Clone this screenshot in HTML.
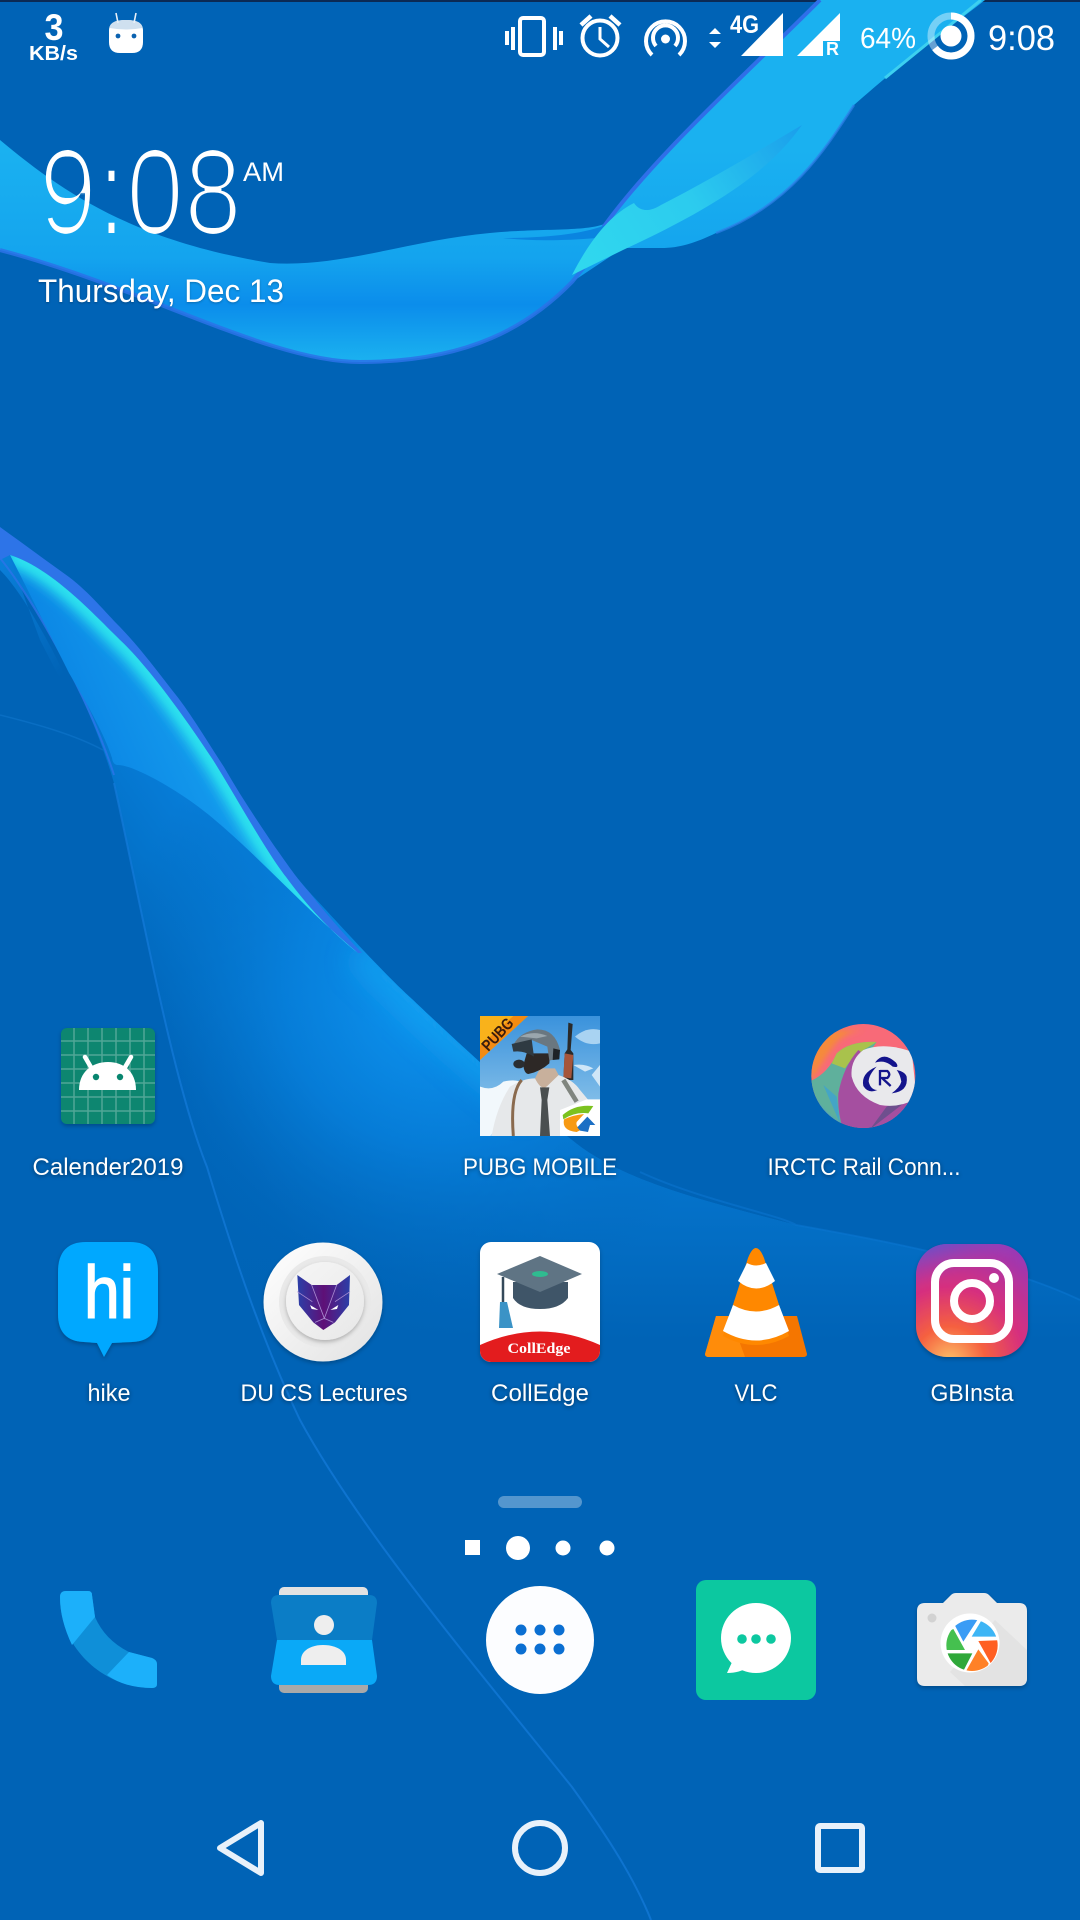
<!DOCTYPE html>
<html><head><meta charset="utf-8"><style>
html,body{margin:0;padding:0;width:1080px;height:1920px;overflow:hidden;background:#0063b6}
svg{display:block;font-family:"Liberation Sans",sans-serif}
.lb{fill:#fff;font-size:24px;text-anchor:middle;filter:drop-shadow(0 1px 2px rgba(0,0,0,.45))}
</style></head><body>
<svg width="1080" height="1920" viewBox="0 0 1080 1920" xmlns="http://www.w3.org/2000/svg">
<defs>
<linearGradient id="gA" gradientUnits="userSpaceOnUse" x1="0" y1="150" x2="0" y2="365"><stop offset="0" stop-color="#1ab1f0"/><stop offset=".5" stop-color="#14a4ee"/><stop offset=".72" stop-color="#0b8deb"/><stop offset="1" stop-color="#1cb4f0"/></linearGradient>
<linearGradient id="gLin" gradientUnits="userSpaceOnUse" x1="330" y1="880" x2="140" y2="1010"><stop offset="0" stop-color="#0a86e4"/><stop offset=".6" stop-color="#0474cc"/><stop offset="1" stop-color="#0065b9"/></linearGradient>
<linearGradient id="gDown" gradientUnits="userSpaceOnUse" x1="0" y1="1000" x2="0" y2="1340"><stop offset="0" stop-color="#0063b6" stop-opacity="0"/><stop offset="1" stop-color="#0063b6"/></linearGradient>
<radialGradient id="gB" gradientUnits="userSpaceOnUse" cx="430" cy="1000" r="320"><stop offset="0" stop-color="#0e94ef"/><stop offset=".45" stop-color="#0780dc" stop-opacity=".75"/><stop offset="1" stop-color="#0063b6" stop-opacity="0"/></radialGradient>
<linearGradient id="gF" gradientUnits="userSpaceOnUse" x1="60" y1="720" x2="240" y2="640"><stop offset="0" stop-color="#0a84e4"/><stop offset="1" stop-color="#1aa8f2"/></linearGradient>
<linearGradient id="gC" gradientUnits="userSpaceOnUse" x1="580" y1="270" x2="800" y2="125"><stop offset="0" stop-color="#30d8ee"/><stop offset=".5" stop-color="#2ccbee"/><stop offset="1" stop-color="#1a9fec"/></linearGradient>
<linearGradient id="gLeft" gradientUnits="userSpaceOnUse" x1="0" y1="570" x2="90" y2="640"><stop offset="0" stop-color="#0a7ed8"/><stop offset="1" stop-color="#0063b6"/></linearGradient>
<radialGradient id="gIns" cx=".3" cy="1.05" r="1.15"><stop offset="0" stop-color="#fdc468"/><stop offset=".28" stop-color="#f56040"/><stop offset=".58" stop-color="#d62f7e"/><stop offset="1" stop-color="#9a38b5"/></radialGradient>
<linearGradient id="gIns2" x1="0" y1="0" x2=".3" y2="1"><stop offset="0" stop-color="#4f5bd5" stop-opacity=".9"/><stop offset=".35" stop-color="#a83cb0" stop-opacity="0"/></linearGradient>
<linearGradient id="gSky" x1="0" y1="0" x2="0" y2="1"><stop offset="0" stop-color="#3a92dc"/><stop offset=".7" stop-color="#7fbce8"/><stop offset="1" stop-color="#c2e0f5"/></linearGradient>
<linearGradient id="gDu" x1="0" y1="0" x2="1" y2="1"><stop offset="0" stop-color="#fff"/><stop offset="1" stop-color="#e2e2e2"/></linearGradient>
<linearGradient id="gDu2" x1="0" y1="0" x2="1" y2="1"><stop offset="0" stop-color="#f6f6f6"/><stop offset="1" stop-color="#e8e8e8"/></linearGradient>
<linearGradient id="gCat" x1="0" y1="0" x2="1" y2="0"><stop offset="0" stop-color="#2b3fa8"/><stop offset=".5" stop-color="#5f1077"/><stop offset="1" stop-color="#2b3fa8"/></linearGradient>
<clipPath id="cB"><path d="M0 555C40 610 90 700 114 783C140 900 172 1080 207 1167C235 1260 262 1340 300 1420C360 1530 470 1660 572 1787C610 1840 635 1880 651 1920L1080 1920L1080 1300C1000 1262 880 1240 796 1225C700 1200 620 1180 572 1140C520 1100 455 1040 413 1000C385 975 340 925 310 893L0 527Z"/></clipPath>
<clipPath id="cF"><path id="pF" d="M10 555C50 568 88 608 120 640C150 668 190 725 213 760C235 795 265 850 286 877C310 910 335 935 358 953C300 905 240 835 189 800C160 780 130 765 118 765Q113 765 112 758C105 735 85 700 69 673C50 635 28 590 10 555Z"/></clipPath>
<clipPath id="cIr"><circle cx="190" cy="198" r="156"/></clipPath>
<clipPath id="cPb"><rect x="60" y="48" width="360" height="360"/></clipPath>
<clipPath id="cCo"><rect x="480" y="1242" width="120" height="120" rx="11"/></clipPath>
<clipPath id="cCal"><rect x="61" y="1028" width="94" height="96" rx="6"/></clipPath>
<clipPath id="cLens"><circle cx="186" cy="181" r="77"/></clipPath>
<filter id="bl4" x="-20%" y="-20%" width="140%" height="140%"><feGaussianBlur stdDeviation="4"/></filter>
<filter id="bl6" x="-30%" y="-30%" width="160%" height="160%"><feGaussianBlur stdDeviation="6"/></filter>
<filter id="bl14" filterUnits="userSpaceOnUse" x="250" y="850" width="450" height="400"><feGaussianBlur stdDeviation="14"/></filter>
<filter id="bl9"><feGaussianBlur stdDeviation="9"/></filter>
<filter id="thin" filterUnits="userSpaceOnUse" x="0" y="100" width="320" height="160"><feMorphology operator="erode" radius="2 1"/><feGaussianBlur stdDeviation=".35"/></filter>
<filter id="sh" x="-20%" y="-20%" width="140%" height="140%"><feDropShadow dx="0" dy="2" stdDeviation="2" flood-color="#000" flood-opacity=".25"/></filter>
</defs>

<!-- wallpaper -->
<rect width="1080" height="1920" fill="#0063b6"/>
<rect width="1080" height="2" fill="#0b2a55"/>

<!-- lower wave -->
<g clip-path="url(#cB)">
<rect x="0" y="500" width="1080" height="1420" fill="url(#gLin)"/>
<rect x="0" y="1000" width="1080" height="920" fill="url(#gDown)"/>
<rect x="0" y="1340" width="1080" height="580" fill="#0063b6"/>
<circle cx="430" cy="1000" r="320" fill="url(#gB)"/>
<path d="M358 953C400 990 460 1055 530 1105" fill="none" stroke="#16a6f2" stroke-width="28" opacity=".75" filter="url(#bl14)"/>
</g>
<path d="M0 530L0 570C30 600 70 680 114 783L40 640Z" fill="url(#gLeft)"/>
<path d="M0 558C34 600 90 700 114 775" fill="none" stroke="#2d74e8" stroke-width="2" opacity=".8"/>
<path d="M114 783C140 900 172 1080 207 1167C235 1260 262 1340 300 1420C360 1530 470 1660 572 1787C610 1840 635 1880 651 1920" fill="none" stroke="#1379d8" stroke-width="2" opacity=".75"/>
<path d="M0 715C40 725 75 735 103 750" fill="none" stroke="#0d74c9" stroke-width="1.500" opacity=".7"/>
<path d="M640 1172C700 1200 780 1215 796 1225C880 1240 1000 1262 1080 1300" fill="none" stroke="#0a74ce" stroke-width="2" opacity=".6"/>
<!-- purple band -->
<path d="M0 527C25 545 48 562 69 577C90 593 105 612 120 627C140 648 155 668 172 690C190 712 205 738 224 767C240 795 258 822 275 847C290 868 298 880 310 893C325 913 345 935 362 953L358 953C335 935 310 910 286 877C265 850 235 795 213 760C190 725 150 668 120 640C88 608 50 568 10 555L0 560Z" fill="#2d74e8"/>
<!-- bright crescent -->
<use href="#pF" fill="url(#gF)"/>
<g clip-path="url(#cF)">
<path d="M10 555C50 568 88 608 120 640C150 668 190 725 213 760C235 795 265 850 286 877C310 910 335 935 358 953" fill="none" stroke="#2be0ee" stroke-width="22" filter="url(#bl6)"/>
<path d="M10 555C50 568 88 608 120 640C150 668 190 725 213 760C235 795 265 850 286 877C310 910 335 935 358 953" fill="none" stroke="#2fe0ee" stroke-width="6" filter="url(#bl4)"/>
</g>

<!-- upper wave -->
<path d="M0 140C60 190 130 240 270 263C340 268 410 240 490 233C540 228 590 232 606 223C650 160 740 80 820 0L985 0C960 20 935 36 916 52C900 66 880 82 854 105C825 150 790 205 716 233C695 243 680 248 661 248L623 248L572 282C530 325 470 362 360 362C270 362 150 290 0 250Z" fill="url(#gA)"/>
<path d="M0 250C150 290 270 362 360 362C470 362 530 325 572 282L606 240" fill="none" stroke="#2b72e8" stroke-width="4" opacity=".85"/>
<path d="M600 232C650 160 740 80 820 0" fill="none" stroke="#2f6fe8" stroke-width="4"/>
<path d="M854 105C825 150 790 205 716 233" fill="none" stroke="#2f7fe8" stroke-width="2.500" opacity=".7"/>
<path d="M981 0L885 78" fill="none" stroke="#3cd0f0" stroke-width="3"/>
<path d="M503 238C540 238 580 235 606 225L597 238C560 241 530 241 503 238Z" fill="#0a84e0"/>
<path d="M572 275C590 240 610 215 634 203C640 212 650 212 661 205C710 180 760 150 802 125C770 170 720 205 623 250Z" fill="url(#gC)"/>

<!-- status bar left -->
<text x="54" y="40" font-size="37" font-weight="700" fill="#fff" text-anchor="middle" textLength="19" lengthAdjust="spacingAndGlyphs">3</text>
<text x="29" y="60" font-size="20" font-weight="700" fill="#fff" textLength="49" lengthAdjust="spacingAndGlyphs">KB/s</text>
<path d="M109 30Q109 20 126 20Q143 20 143 30L143 42Q143 53 132 53L120 53Q109 53 109 42Z" fill="#fff"/>
<path d="M109.500 28Q110 20 126 20Q142 20 142.500 28Q126 31 109.500 28Z" fill="#cfe0ef"/>
<path d="M116 13L118 23M136 13L134 23" stroke="#e8f0f8" stroke-width="1.600"/>
<circle cx="118" cy="36" r="2.400" fill="#0b62b0"/><circle cx="134" cy="36" r="2.400" fill="#0b62b0"/>

<!-- status bar right -->
<g fill="#fff">
<rect x="505" y="31" width="4" height="14"/><rect x="511" y="27" width="4" height="23"/>
<rect x="553" y="27" width="4" height="23"/><rect x="559" y="31" width="4" height="14"/>
</g>
<rect x="520" y="18" width="24" height="37" rx="3" fill="none" stroke="#fff" stroke-width="4"/>
<circle cx="600" cy="38" r="17.500" fill="none" stroke="#fff" stroke-width="4"/>
<path d="M600 27V39L609 47" fill="none" stroke="#fff" stroke-width="3"/>
<path d="M581 25L591 16M610 16L620 25" stroke="#fff" stroke-width="4.500"/>
<circle cx="665.500" cy="39" r="4.500" fill="#fff"/>
<path d="M656 46A12.500 12.500 0 1 1 675 46" fill="none" stroke="#fff" stroke-width="4"/>
<path d="M652 55A19.500 19.500 0 1 1 679 55" fill="none" stroke="#fff" stroke-width="4"/>
<path d="M715 28L721 34H709ZM715 48L709 42H721Z" fill="#fff"/>
<text x="730" y="33" font-size="25" font-weight="700" fill="#fff" textLength="29" lengthAdjust="spacingAndGlyphs">4G</text>
<polygon points="783,13 783,56 741,56" fill="#fff"/>
<polygon points="840,13 840,41 823,41 823,56 797,56" fill="#fff"/>
<text x="826" y="55" font-size="18" font-weight="700" fill="#fff" textLength="13" lengthAdjust="spacingAndGlyphs">R</text>
<text x="860" y="48" font-size="29" fill="#fff" textLength="56" lengthAdjust="spacingAndGlyphs">64%</text>
<circle cx="951" cy="36" r="20" fill="none" stroke="#fff" stroke-opacity=".4" stroke-width="7"/>
<path d="M951 16A20 20 0 1 1 935 48" fill="none" stroke="#fff" stroke-width="7"/>
<circle cx="951" cy="36" r="10.500" fill="#fff"/>
<text x="988" y="50" font-size="35" fill="#fff" textLength="67" lengthAdjust="spacingAndGlyphs">9:08</text>

<!-- clock -->
<g filter="url(#thin)"><text x="39" y="234" font-size="122" fill="#fff" textLength="203" lengthAdjust="spacingAndGlyphs">9:08</text></g>
<text x="243" y="181" font-size="27" fill="#fff" textLength="41" lengthAdjust="spacingAndGlyphs">AM</text>
<text x="38" y="302" font-size="32" fill="#fff" textLength="246" lengthAdjust="spacingAndGlyphs" style="filter:drop-shadow(0 1px 1px rgba(0,0,0,.25))">Thursday, Dec 13</text>

<!-- Calender2019 -->
<g filter="url(#sh)"><rect x="61" y="1028" width="94" height="96" rx="6" fill="#08866f"/></g>
<g clip-path="url(#cCal)" stroke="#fff" stroke-opacity=".28" stroke-width="1.500">
<path d="M74 1028V1124M88 1028V1124M102 1028V1124M116 1028V1124M130 1028V1124M144 1028V1124M61 1041H155M61 1055H155M61 1069H155M61 1083H155M61 1097H155M61 1111H155"/>
</g>
<path d="M79 1090C79 1072 92 1062 108 1062C124 1062 136 1072 136 1090Z" fill="#fff"/>
<path d="M85 1057L92 1069M131 1057L124 1069" stroke="#fff" stroke-width="4.500" stroke-linecap="round"/>
<circle cx="96" cy="1077" r="3.200" fill="#08866f"/><circle cx="120" cy="1077" r="3.200" fill="#08866f"/>
<text class="lb" x="108" y="1175" textLength="151" lengthAdjust="spacingAndGlyphs">Calender2019</text>

<!-- PUBG -->
<g transform="translate(460 1000) scale(.33333)">
<g clip-path="url(#cPb)">
<rect x="60" y="48" width="360" height="360" fill="url(#gSky)"/>
<path d="M60 260Q100 275 130 245Q170 235 190 250L150 340L90 408H60Z" fill="#f2f8fc"/>
<path d="M345 110Q380 80 420 90V130Q380 140 345 110Z" fill="#a9d3f2"/>
<path d="M340 195Q375 190 400 205L375 215Z M395 225L420 195V260Z" fill="#cfe6f7"/>
<path d="M325 68L338 72L332 150L340 160V240L310 240L314 160L322 148Z" fill="#2a2a2a"/>
<path d="M314 160L340 165L334 235L310 232Z" fill="#a5553b"/>
<path d="M95 408Q110 320 150 260Q190 235 225 235L295 225Q340 240 360 270L385 300L400 408Z" fill="#e6e8ea"/>
<path d="M185 240Q150 280 160 408" fill="none" stroke="#8a6a4e" stroke-width="9"/>
<path d="M310 240L350 305" stroke="#80857f" stroke-width="14"/>
<path d="M225 235Q245 275 262 258L296 225L285 205L240 205Z" fill="#c8b09c"/>
<path d="M240 262L268 262L262 300L270 408H240L245 300Z" fill="#4a4f50"/>
<path d="M190 195Q192 220 205 222Q240 215 268 190L270 160L200 160Z" fill="#2d2826"/>
<path d="M160 135Q180 95 232 88Q285 88 300 150L295 175L268 182L262 140L215 120Z" fill="#6a7780"/>
<path d="M180 110Q220 90 262 108L230 115Z" fill="#9aa6ad"/>
<path d="M155 132L215 118L222 170Q190 150 160 155Z" fill="#2f3a42"/>
<ellipse cx="177" cy="192" rx="17" ry="13" fill="#2a2e32"/>
<path d="M280 145L300 150L298 178L278 180Z" fill="#1e2226"/>
<polygon points="60,48 204,48 60,180" fill="#f9b21b"/>
<polygon points="160,48 204,48 60,180 60,138" fill="#f38b12"/>
<text x="115" y="118" font-size="48" font-weight="700" fill="#3a1c0c" text-anchor="middle" textLength="115" lengthAdjust="spacingAndGlyphs" transform="rotate(-47 115 105)">PUBG</text>
<polygon points="300,330 380,298 420,298 420,408 300,408" fill="#fff"/>
<path d="M308 345Q345 312 400 318L385 340Q345 335 310 358Z" fill="#7cc21f"/>
<path d="M312 358Q340 345 372 342L350 366Q346 382 366 388L350 396Q305 392 312 358Z" fill="#f79a13"/>
<path d="M352 382L382 350L406 375H390L384 396L360 392Z" fill="#1c6fc4"/>
</g>
</g>
<text class="lb" x="540" y="1175" textLength="154" lengthAdjust="spacingAndGlyphs">PUBG MOBILE</text>

<!-- IRCTC -->
<g transform="translate(800 1010) scale(.33333)">
<g clip-path="url(#cIr)">
<rect x="30" y="40" width="320" height="320" fill="#f86a78"/>
<path d="M30 220V60H195Q130 65 100 110Q70 150 30 220Z" fill="#f58a3a" filter="url(#bl9)"/>
<path d="M28 215Q85 190 110 130Q150 92 230 96L170 180L120 350L30 350Z" fill="#5fb09c"/>
<path d="M110 130Q150 92 230 96L190 120Q150 150 135 175L95 160Z" fill="#a9c24c"/>
<path d="M40 260Q70 310 128 345L60 350Z" fill="#3a9fdc" filter="url(#bl4)"/>
<path d="M70 225L120 340L110 260Z" fill="#44a5c6"/>
<path d="M175 120Q130 170 115 250Q112 310 130 358H300L350 255Z" fill="#a54fa0"/>
<path d="M210 358L350 250L260 290Z" fill="#6e4f8e"/>
<path d="M335 125Q250 95 190 120Q150 150 155 200Q170 260 240 285Q300 295 350 265Z" fill="#e9e9ec"/>
</g>
<g fill="#14148c">
<path d="M225 158Q250 122 288 158Q300 175 278 170Q255 148 225 158Z"/>
<path d="M190 228Q182 190 230 170Q206 195 206 215Q212 240 232 240Q205 252 190 228Z"/>
<path d="M320 200Q326 245 275 250Q300 232 304 215Q300 192 290 180Q315 185 320 200Z"/>
</g>
<path d="M240 180V226M240 183H262Q274 193 262 204H246L272 228" fill="none" stroke="#14148c" stroke-width="7"/>
</g>
<text class="lb" x="864" y="1175" textLength="193" lengthAdjust="spacingAndGlyphs">IRCTC Rail Conn...</text>

<!-- hike -->
<g filter="url(#sh)"><path d="M86 1242H130Q158 1242 158 1272V1314Q158 1341 132 1342L112 1343L104 1357L97 1343L84 1342Q58 1341 58 1314V1272Q58 1242 86 1242Z" fill="#02a8ff"/></g>
<text x="109" y="1318" font-size="74" font-weight="400" fill="#fff" stroke="#fff" stroke-width="1.500" text-anchor="middle" textLength="50" lengthAdjust="spacingAndGlyphs">hi</text>
<text class="lb" x="109" y="1401" textLength="43" lengthAdjust="spacingAndGlyphs">hike</text>

<!-- DU CS -->
<circle cx="323" cy="1302" r="59.500" fill="url(#gDu)" filter="url(#sh)"/>
<circle cx="325" cy="1302" r="46" fill="#e9e9e9"/>
<circle cx="325" cy="1301" r="39" fill="url(#gDu2)" filter="url(#sh)"/>
<g transform="translate(255 1235) scale(.33333)">
<path d="M127 120L170 150H245L285 120L282 210L240 262L205 285L175 262L132 210Z" fill="url(#gCat)"/>
<path d="M170 150L208 250L245 150M127 170L172 200M285 170L240 200M180 262L208 250L235 262" fill="none" stroke="#a88ad0" stroke-width="2.500"/>
<path d="M165 210L190 225L170 222ZM250 210L226 225L246 222Z" fill="#fff"/>
</g>
<text class="lb" x="324" y="1401" textLength="167" lengthAdjust="spacingAndGlyphs">DU CS Lectures</text>

<!-- ColEdge -->
<rect x="480" y="1242" width="120" height="120" rx="11" fill="#fff" filter="url(#sh)"/>
<g clip-path="url(#cCo)">
<path d="M480 1345Q540 1318 600 1345V1365H480Z" fill="#e31c1e"/>
<text x="539" y="1353" font-family="'Liberation Serif',serif" font-size="15" font-weight="700" fill="#fff" text-anchor="middle" textLength="63" lengthAdjust="spacingAndGlyphs">CollEdge</text>
</g>
<path d="M513 1282H568V1298Q560 1309 540 1309Q520 1309 513 1298Z" fill="#3f5568"/>
<polygon points="540,1256 582,1274 540,1292 497,1274" fill="#5f7484"/>
<ellipse cx="540" cy="1274" rx="8" ry="3" fill="#2fbb90"/>
<path d="M503 1277V1303" stroke="#34495a" stroke-width="2.500"/>
<polygon points="500,1302 507,1302 513,1328 499,1328" fill="#3b93c6"/>
<text class="lb" x="540" y="1401" textLength="98" lengthAdjust="spacingAndGlyphs">CollEdge</text>

<!-- VLC -->
<path d="M716 1316H797L807 1354Q807 1357 803 1357H709Q705 1357 705 1354Z" fill="#f57600"/>
<path d="M716 1316H730L745 1357H709Q705 1357 705 1354Z" fill="#ff8c0a"/>
<path d="M748 1258Q756 1238 764 1258L789 1336Q756 1354 723 1336Z" fill="#ff8800"/>
<path d="M747 1263Q756 1268 766 1263L775 1281Q756 1296 738 1281Z" fill="#fff"/>
<path d="M733 1305Q756 1318 779 1305L789 1331Q756 1350 723 1331Z" fill="#fff"/>
<text class="lb" x="756" y="1401" textLength="43" lengthAdjust="spacingAndGlyphs">VLC</text>

<!-- Instagram -->
<g filter="url(#sh)"><rect x="916" y="1244" width="112" height="113" rx="31" fill="url(#gIns)"/></g>
<rect x="916" y="1244" width="112" height="113" rx="31" fill="url(#gIns2)"/>
<rect x="935" y="1263" width="74" height="76" rx="19" fill="none" stroke="#fff" stroke-width="8"/>
<circle cx="972" cy="1301" r="18" fill="none" stroke="#fff" stroke-width="8"/>
<circle cx="994" cy="1278" r="5" fill="#fff"/>
<text class="lb" x="972" y="1401" textLength="83" lengthAdjust="spacingAndGlyphs">GBInsta</text>

<!-- page indicators -->
<rect x="498" y="1496" width="84" height="12" rx="6" fill="#fff" fill-opacity=".33"/>
<rect x="465" y="1540" width="15" height="15" fill="#fff"/>
<circle cx="518" cy="1548" r="12" fill="#fff"/>
<circle cx="563" cy="1548" r="7.500" fill="#fff"/>
<circle cx="607" cy="1548" r="7.500" fill="#fff"/>

<!-- Phone -->
<path d="M60 1597Q60 1591 66 1591H88Q92 1591 92 1595L95 1617Q105 1640 129 1652L152 1658Q157 1660 157 1664V1684Q157 1688 152 1688C105 1688 60 1650 60 1597Z" fill="#0f8fd8"/>
<path d="M60 1597Q60 1591 66 1591H88Q92 1591 92 1595L95 1617L72 1645Q60 1620 60 1597Z" fill="#1cb0fa"/>
<path d="M129 1652L152 1658Q157 1660 157 1664V1684Q157 1688 152 1688Q125 1688 107 1675Z" fill="#1cb0fa"/>

<!-- Contacts -->
<rect x="279" y="1587" width="89" height="14" rx="5" fill="#e2e2e2"/>
<rect x="279" y="1680" width="89" height="13" rx="5" fill="#a9a9a9"/>
<path d="M279 1595H369Q377 1595 377 1603L372 1640H277L271 1603Q271 1595 279 1595Z" fill="#0b7dc6"/>
<path d="M277 1640H372L377 1676Q377 1685 368 1685H280Q271 1685 271 1676Z" fill="#0aa9f7"/>
<ellipse cx="324" cy="1625" rx="10" ry="10" fill="#eee"/>
<path d="M301 1665V1660C301 1650 312 1645 323 1645C335 1645 346 1650 346 1660V1665Z" fill="#eee"/>

<!-- App drawer -->
<circle cx="540" cy="1640" r="54" fill="#fcfdff"/>
<g fill="#0b6fd2"><circle cx="521" cy="1630" r="5.500"/><circle cx="540" cy="1630" r="5.500"/><circle cx="559" cy="1630" r="5.500"/><circle cx="521" cy="1649" r="5.500"/><circle cx="540" cy="1649" r="5.500"/><circle cx="559" cy="1649" r="5.500"/></g>

<!-- Messages -->
<rect x="696" y="1580" width="120" height="120" rx="10" fill="#0cc8a0"/>
<circle cx="756" cy="1638" r="35" fill="#fff"/>
<path d="M733 1660L727 1673Q740 1673 748 1667Z" fill="#fff"/>
<g fill="#0cc8a0"><circle cx="742" cy="1639" r="4.800"/><circle cx="756" cy="1639" r="4.800"/><circle cx="771" cy="1639" r="4.800"/></g>

<!-- Camera -->
<g filter="url(#sh)"><path d="M925 1603H943L951 1595Q953 1593 956 1593H984Q987 1593 989 1595L997 1603H1019Q1027 1603 1027 1611V1678Q1027 1686 1019 1686H925Q917 1686 917 1678V1611Q917 1603 925 1603Z" fill="#ebebeb"/></g>
<path d="M995 1620L1027 1650V1678Q1027 1686 1019 1686H965L950 1672Z" fill="#dfdfdf" opacity=".7"/>
<circle cx="932" cy="1618" r="4.500" fill="#d2d2d2"/>
<circle cx="970" cy="1643" r="29.500" fill="#fff"/>
<g transform="translate(910 1585) scale(.33333)" clip-path="url(#cLens)">
<polygon points="160,170 130,112 140,90 212,90 200,108" fill="#3a9cf5"/>
<polygon points="185,155 215,105 230,90 290,120 290,155" fill="#3db5f5"/>
<polygon points="205,168 290,165 290,200 245,240" fill="#ff5f22"/>
<polygon points="205,193 236,235 220,280 165,280 170,255" fill="#ff8127"/>
<polygon points="113,205 187,205 160,258 130,270 100,230" fill="#2fa83a"/>
<polygon points="130,132 165,195 100,195 95,150" fill="#45c04f"/>
</g>

<!-- nav -->
<path d="M261 1823V1873L220 1848Z" fill="none" stroke="#e8f1fa" stroke-width="6" stroke-linejoin="round"/>
<circle cx="540" cy="1848" r="25" fill="none" stroke="#e8f1fa" stroke-width="6"/>
<rect x="818" y="1826" width="44" height="44" rx="2" fill="none" stroke="#e8f1fa" stroke-width="6"/>
</svg>
</body></html>
